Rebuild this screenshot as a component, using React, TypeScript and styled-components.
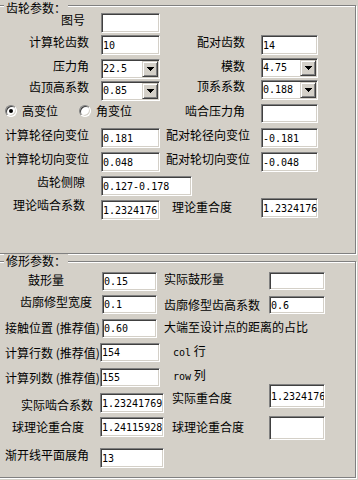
import { createGlobalStyle, css, styled } from "styled-components";

const GlobalStyle = createGlobalStyle`
  html, body {
    margin: 0;
    padding: 0;
  }
  body {
    background: #d4d0c8;
    font-family: "Noto Sans CJK SC", "Noto Sans", sans-serif;
    font-size: 12px;
    color: #000;
  }
`;

// win2000 sunken edge (text boxes, combo boxes)
const sunken = css`
  box-sizing: border-box;
  border: 1px solid;
  border-color: #808080 #fff #fff #808080;
  box-shadow: inset 1px 1px 0 #404040, inset -1px -1px 0 #d4d0c8;
`;

const Dialog = styled.div`
  width: 358px;
  height: 480px;
  overflow: hidden;
  background: #d4d0c8;
  display: flex;
  flex-direction: column;
`;

const Group = styled.section<{ $mt: number; $h: number; $pt: number }>`
  position: relative;
  flex-shrink: 0;
  box-sizing: border-box;
  width: 360px;
  height: ${(p) => p.$h}px;
  margin: ${(p) => p.$mt}px 0 0 -4px;
  padding: ${(p) => p.$pt}px 0 0 3px;
  border: 1px solid #808080;
  box-shadow: 1px 1px 0 #fff, inset 1px 1px 0 #fff;
  display: flex;
  flex-direction: column;
`;

const Caption = styled.span<{ $top: number }>`
  position: absolute;
  top: ${(p) => p.$top}px;
  left: 7px;
  padding: 0 2px;
  background: #d4d0c8;
  line-height: 14px;
`;

const Row = styled.div<{ $mt: number; $h: number }>`
  display: flex;
  align-items: flex-start;
  flex-shrink: 0;
  height: ${(p) => p.$h}px;
  margin-top: ${(p) => p.$mt}px;
`;

const Label = styled.span<{
  $w?: number;
  $pl?: number;
  $pr?: number;
  $right?: boolean;
  $dy?: number;
}>`
  flex-shrink: 0;
  box-sizing: border-box;
  width: ${(p) => (p.$w ? `${p.$w}px` : "auto")};
  padding: 0 ${(p) => p.$pr ?? 0}px 0 ${(p) => p.$pl ?? 0}px;
  margin-top: ${(p) => p.$dy ?? 0}px;
  text-align: ${(p) => (p.$right ? "right" : "left")};
  line-height: 14px;
  white-space: nowrap;
`;

const Mono = styled.span`
  font-family: "DejaVu Sans Mono", monospace;
  font-size: 10px;
`;

const TextBox = styled.input<{ $w: number; $h?: number; $dy?: number }>`
  ${sunken};
  flex-shrink: 0;
  width: ${(p) => p.$w}px;
  height: ${(p) => p.$h ?? 20}px;
  margin: ${(p) => p.$dy ?? 0}px 0 0 0;
  padding: 0 0 0 1px;
  background: #fff;
  font-family: "DejaVu Sans Mono", monospace;
  font-size: 10px;
  color: #000;
  outline: none;
`;

const ComboFrame = styled.div<{ $w: number; $dy?: number }>`
  ${sunken};
  flex-shrink: 0;
  display: flex;
  align-items: center;
  width: ${(p) => p.$w}px;
  height: 20px;
  margin-top: ${(p) => p.$dy ?? 0}px;
  padding: 1px;
  background: #fff;
`;

const ComboValue = styled.span`
  flex: 1;
  font-family: "DejaVu Sans Mono", monospace;
  font-size: 10px;
  line-height: 16px;
`;

const DropButton = styled.span`
  box-sizing: border-box;
  width: 16px;
  height: 16px;
  background: #d4d0c8;
  border: 1px solid;
  border-color: #d4d0c8 #404040 #404040 #d4d0c8;
  box-shadow: inset 1px 1px 0 #fff, inset -1px -1px 0 #808080;
  display: flex;
  align-items: center;
  justify-content: center;
`;

const RadioCell = styled.div`
  flex-shrink: 0;
  width: 160px;
  display: flex;
  align-items: flex-start;
`;

const RadioItem = styled.label<{ $ml: number }>`
  display: flex;
  align-items: flex-start;
  gap: 5px;
  margin-left: ${(p) => p.$ml}px;
  line-height: 14px;
`;

const RadioDot = styled.span<{ $on?: boolean }>`
  position: relative;
  box-sizing: border-box;
  width: 12px;
  height: 12px;
  margin-top: 1px;
  border-radius: 50%;
  border: 1px solid;
  border-color: #808080 #fff #fff #808080;
  box-shadow: inset 1px 1px 0 #404040, inset -1px -1px 0 #d4d0c8;
  background: #fff;

  &::after {
    content: "";
    display: ${(p) => (p.$on ? "block" : "none")};
    position: absolute;
    left: 3px;
    top: 3px;
    width: 4px;
    height: 4px;
    border-radius: 50%;
    background: #000;
  }
`;

function Combo({ w, dy, value }: { w: number; dy?: number; value: string }) {
  return (
    <ComboFrame $w={w} $dy={dy}>
      <ComboValue>{value}</ComboValue>
      <DropButton>
        <svg width="7" height="4" viewBox="0 0 7 4" shapeRendering="crispEdges">
          <path d="M0 0h7v1h-1v1h-1v1h-1v1h-1v-1h-1v-1h-1v-1h-1z" fill="#000" />
        </svg>
      </DropButton>
    </ComboFrame>
  );
}

function Radio({ ml, on, text }: { ml: number; on?: boolean; text: string }) {
  return (
    <RadioItem $ml={ml}>
      <RadioDot $on={on} />
      {text}
    </RadioItem>
  );
}

export default function App() {
  return (
    <>
      <GlobalStyle />
      <Dialog>
        <Group $mt={5} $h={249} $pt={7}>
          <Caption $top={-5}>齿轮参数：</Caption>
          <Row $mt={0} $h={20}>
            <Label $w={101} $pr={16} $right>图号</Label>
            <TextBox $w={59} value="" readOnly />
          </Row>
          <Row $mt={2} $h={20}>
            <Label $w={101} $pr={12} $right>计算轮齿数</Label>
            <TextBox $w={59} value="10" readOnly />
            <Label $w={101} $pr={16} $right>配对齿数</Label>
            <TextBox $w={57} value="14" readOnly />
          </Row>
          <Row $mt={3} $h={21}>
            <Label $w={101} $pr={12} $right $dy={1}>压力角</Label>
            <Combo w={59} dy={1} value="22.5" />
            <Label $w={101} $pr={16} $right $dy={1}>模数</Label>
            <Combo w={57} value="4.75" />
          </Row>
          <Row $mt={1} $h={21}>
            <Label $w={101} $pr={12} $right>齿顶高系数</Label>
            <Combo w={59} dy={1} value="0.85" />
            <Label $w={101} $pr={16} $right $dy={-1}>顶系系数</Label>
            <Combo w={57} value="0.188" />
          </Row>
          <Row $mt={3} $h={19}>
            <RadioCell>
              <Radio ml={5} on text="高变位" />
              <Radio ml={21} text="角变位" />
            </RadioCell>
            <Label $w={101} $pr={16} $right>啮合压力角</Label>
            <TextBox $w={57} $h={19} value="" readOnly />
          </Row>
          <Row $mt={5} $h={20}>
            <Label $w={101} $pr={12} $right>计算轮径向变位</Label>
            <TextBox $w={59} value="0.181" readOnly />
            <Label $w={101} $pr={11} $right>配对轮径向变位</Label>
            <TextBox $w={57} value="-0.181" readOnly />
          </Row>
          <Row $mt={4} $h={20}>
            <Label $w={101} $pr={12} $right>计算轮切向变位</Label>
            <TextBox $w={59} value="0.048" readOnly />
            <Label $w={101} $pr={11} $right>配对轮切向变位</Label>
            <TextBox $w={57} value="-0.048" readOnly />
          </Row>
          <Row $mt={4} $h={20}>
            <Label $w={101} $pr={16} $right $dy={-1}>齿轮侧隙</Label>
            <TextBox $w={91} value="0.127-0.178" readOnly />
          </Row>
          <Row $mt={2} $h={22}>
            <Label $w={101} $pr={16} $right>理论啮合系数</Label>
            <TextBox $w={59} $dy={2} value="1.2324176" readOnly />
            <Label $w={101} $pl={12} $dy={2}>理论重合度</Label>
            <TextBox $w={57} value="1.2324176" readOnly />
          </Row>
        </Group>

        <Group $mt={7} $h={217} $pt={10}>
          <Caption $top={-8}>修形参数：</Caption>
          <Row $mt={0} $h={19}>
            <Label $w={102} $pl={28} $dy={1}>鼓形量</Label>
            <TextBox $w={55} $h={19} value="0.15" readOnly />
            <Label $w={112} $pl={7}>实际鼓形量</Label>
            <TextBox $w={56} $h={18} value="" readOnly />
          </Row>
          <Row $mt={4} $h={19}>
            <Label $w={102} $pl={20}>齿廓修型宽度</Label>
            <TextBox $w={55} $h={19} value="0.1" readOnly />
            <Label $w={112} $pl={7} $dy={3}>齿廓修型齿高系数</Label>
            <TextBox $w={56} $h={18} $dy={1} value="0.6" readOnly />
          </Row>
          <Row $mt={5} $h={19}>
            <Label $w={102} $pl={5} $dy={2}>接触位置 (推荐值)</Label>
            <TextBox $w={55} $h={19} value="0.60" readOnly />
            <Label $pl={7} $dy={1}>大端至设计点的距离的占比</Label>
          </Row>
          <Row $mt={5} $h={19}>
            <Label $w={100} $pl={5} $dy={3}>计算行数 (推荐值)</Label>
            <TextBox $w={60} $h={19} value="154" readOnly />
            <Label $pl={13} $dy={1}>
              <Mono>col</Mono> 行
            </Label>
          </Row>
          <Row $mt={6} $h={19}>
            <Label $w={100} $pl={5} $dy={3}>计算列数 (推荐值)</Label>
            <TextBox $w={60} $h={19} value="155" readOnly />
            <Label $pl={13}>
              <Mono>row</Mono> 列
            </Label>
          </Row>
          <Row $mt={-3} $h={24}>
            <Label $w={100} $pl={21} $dy={14}>实际啮合系数</Label>
            <TextBox $w={64} $dy={9} value="1.23241769" readOnly />
            <Label $w={105} $pl={8} $dy={7}>实际重合度</Label>
            <TextBox $w={56} $h={24} value="1.2324176" readOnly />
          </Row>
          <Row $mt={8} $h={24}>
            <Label $w={100} $pl={12} $dy={4}>球理论重合度</Label>
            <TextBox $w={64} $dy={1} value="1.24115928" readOnly />
            <Label $w={105} $pl={8} $dy={4}>球理论重合度</Label>
            <TextBox $w={56} $h={24} value="" readOnly />
          </Row>
          <Row $mt={8} $h={20}>
            <Label $w={100} $pl={5}>渐开线平面展角</Label>
            <TextBox $w={64} value="13" readOnly />
          </Row>
        </Group>
      </Dialog>
    </>
  );
}
